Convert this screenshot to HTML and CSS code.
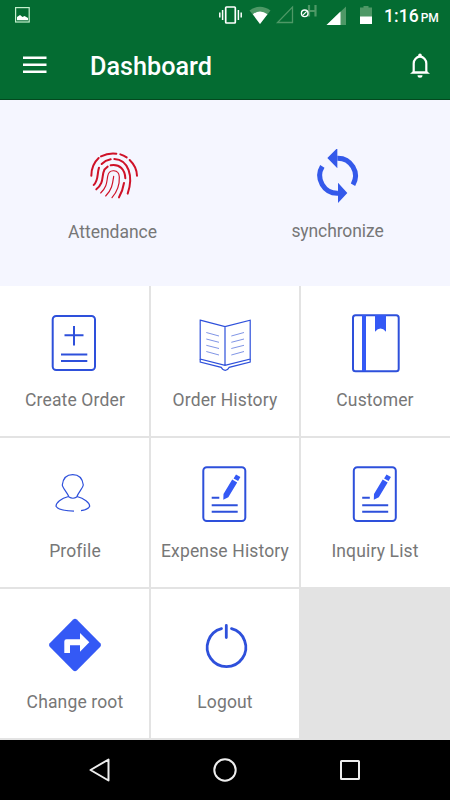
FILE: index.html
```
<!DOCTYPE html>
<html lang="en">
<head>
    <meta charset="UTF-8">
    <meta name="viewport" content="width=device-width, initial-scale=1.0">
    <title>Dashboard</title>
    <link rel="stylesheet" href="styles.css">
</head>
<body>
    <header class="header">
        <div class="status-bar">
            <svg class="status-picture" width="15" height="30" viewBox="0 0 15 30">
                <rect x="0.6" y="7.6" width="13.6" height="14.4" fill="none" stroke="#c5f0cd" stroke-width="1.2"/>
                <path d="M2 20.3V17l3-2 2.5 2 2-1 3.5 2v2.3z" fill="#fff"/>
            </svg>
            <div class="status-icons">
                <svg width="30" height="30" viewBox="0 0 30 30" fill="none" stroke="#fff">
                    <rect x="6.7" y="7" width="9.6" height="16" rx="0.8" stroke-width="1.7"/>
                    <path d="M3.6 10v10M19.4 10v10M0.8 12.5v5M22.2 12.5v5" stroke-width="1.5"/>
                </svg>
                <svg width="26" height="30" viewBox="0 0 26 30">
                    <path d="M0.5 10.5Q11 3 21.5 10.5L11 24z" fill="#4e9866"/>
                    <path d="M3.8 14.3Q11 8.5 18.5 14.3L11 24z" fill="#fff"/>
                </svg>
                <svg width="24" height="30" viewBox="0 0 24 30">
                    <path d="M2.5 22.5H17.5V7z" fill="none" stroke="#4e9866" stroke-width="1.3"/>
                </svg>
                <svg width="26" height="30" viewBox="0 0 26 30" fill="none">
                    <path d="M10 5v11.500M16.500 5v11.500M10 11h6.500" stroke="#4e9866" stroke-width="2.200"/>
                    <circle cx="5.700" cy="13.300" r="3.300" stroke="#fff" stroke-width="1.400"/>
                    <path d="M3.700 15.300l4-4" stroke="#fff" stroke-width="1.200"/>
                </svg>
                <svg width="34" height="30" viewBox="0 0 34 30">
                    <path d="M1.500 25L21 6.500V25z" fill="#4e9866"/>
                    <path d="M1.500 25L15.500 11.500V25z" fill="#fff"/>
                </svg>
                <svg width="25" height="30" viewBox="0 0 25 30">
                    <path d="M1 7.500h3.500V6h5v1.500H13V17H1z" fill="#4e9866"/>
                    <path d="M1 16.500h12V24H1z" fill="#fff"/>
                </svg>
                <div class="clock"><span>1:16</span><small>PM</small></div>
            </div>
        </div>
        <div class="toolbar">
            <svg width="24" height="20" viewBox="0 0 24 20">
                <path d="M0 1.700h23.500M0 8.700h23.500M0 15.700h23.500" stroke="#fff" stroke-width="2.400"/>
            </svg>
            <h1>Dashboard</h1>
            <svg class="bell" width="20" height="26" viewBox="0 0 20 26">
                <path d="M3.700 20V10.500a6.300 6.800 0 0 1 12.600 0V20" fill="none" stroke="#fff" stroke-width="2.200"/>
                <path d="M0 20.800L3 18.300H17L20 20.800zM8.200 4V2.200a1.800 1.800 0 0 1 3.600 0V4zM7.500 22.300h5a2.500 2.500 0 0 1-5 0z" fill="#fff"/>
            </svg>
        </div>
    </header>

    <section class="quick">
        <div class="quick-item">
            <svg width="57" height="57" viewBox="102 42 171 171" fill="none" stroke="#cf1228" stroke-width="6" stroke-linecap="round">
                <path d="M124 122C124 100 132 82 146 69M153 64Q175 53 199 56M211 58Q221 61 230 67M239 75Q260 95 261 122"/>
                <path d="M131 150C146 138 141 115 147 98M155 87Q166 76 182 73M193 72C236 74 251 125 233 176"/>
                <path d="M139 163C160 146 156 130 160 113Q163 101 173 95M182 91C210 86 225 105 226 130M222 144Q218 168 207 187"/>
                <path d="M152 174C172 155 170 140 173 124C177 100 207 103 208 126C209 150 200 172 186 188M167 183C186 165 188 145 191 124" stroke-width="3.500"/>
            </svg>
            <span>Attendance</span>
        </div>
        <div class="quick-item sync">
            <svg width="57" height="57" viewBox="102 42 171 171">
                <path d="M187 69.500A53 53 0 0 1 234 149M142 94A53 53 0 0 0 189 174.500" fill="none" stroke="#3459ea" stroke-width="15"/>
                <path d="M157 69L187 39V100zM217 174L189 204V143z" fill="#3459ea"/>
            </svg>
            <span>synchronize</span>
        </div>
    </section>

    <main class="menu">
        <div class="tile">
            <svg class="icon" viewBox="0 0 70 70">
                <rect x="12.700" y="7" width="42.300" height="54" rx="3.500"/>
                <path d="M34 17v19.500M24.500 26.300h19M21 45.500h26.300M21 52h26.300"/>
            </svg>
            <span>Create Order</span>
        </div>
        <div class="tile">
            <svg class="icon thin" viewBox="0 0 70 70">
                <path d="M10.200 11.200L35 17.700 60.200 11.200V50L35 56.300 10.200 50zM35 17.700v38.600"/>
                <path d="M10.200 50v3l21 5.300q1.500 3 4 3t4-3L60.200 53v-3"/>
                <path class="faint" d="M16.300 23.500L29 27M16.300 30L29 33.300M16.300 36.300L29 39.500M16.300 42.500L29 46M41.300 27L54 23.500M41.300 33.300L54 30M41.300 39.500L54 36.300M41.300 46L54 42.500"/>
            </svg>
            <span>Order History</span>
        </div>
        <div class="tile">
            <svg class="icon" viewBox="0 0 70 70">
                <rect x="13" y="6.300" width="45.700" height="56" rx="2.500"/>
                <path class="solid" d="M22 6h4v56h-4zM35 6h11v16.700q-5.500-6.500-11 0z"/>
            </svg>
            <span>Customer</span>
        </div>
        <div class="tile">
            <svg class="icon thin" viewBox="0 0 70 70">
                <path d="M29 36C27 31 22.500 27 22.300 24 23 17.500 26.500 13.600 32.700 13.600S42.500 17.500 43.300 24C43 27 38.500 31 36.700 36Q33 38.500 29 36z"/>
                <path d="M28.500 35.500C21 37.500 16 41.500 16 45.300Q18 49.500 34 50.200M37 35.500C44 37.500 49.700 41.500 49.700 45.300Q48.500 48.500 41 49.700"/>
            </svg>
            <span>Profile</span>
        </div>
        <div class="tile">
            <svg class="icon" viewBox="0 0 70 70">
                <rect x="13.300" y="6.300" width="42" height="53.700" rx="3.500"/>
                <path d="M21.700 36.700h7.600M21.700 44.300h26M21.700 50.700h26"/>
                <path class="solid" d="M33.300 38.700L33.500 33 42.200 18.400 47.200 21.400 38.300 36.300zM46 13.500L50.400 16.100 48.100 20 43.600 17.400z"/>
            </svg>
            <span>Expense History</span>
        </div>
        <div class="tile">
            <svg class="icon" viewBox="0 0 70 70">
                <rect x="13.800" y="6.300" width="42" height="53.700" rx="3.500"/>
                <path d="M22.200 36.700h7.600M22.200 44.300h26M22.200 50.700h26"/>
                <path class="solid" d="M33.800 38.700L34 33 42.700 18.400 47.700 21.400 38.800 36.300zM46.500 13.500L50.900 16.100 48.600 20 44.100 17.400z"/>
            </svg>
            <span>Inquiry List</span>
        </div>
        <div class="tile">
            <svg class="icon" viewBox="0 0 70 70">
                <path class="solid" d="M33.200 7.400Q35 6 36.800 7.400L60.300 31.200Q61.800 33 60.300 34.800L36.800 58.600Q35 60 33.200 58.600L9.700 34.800Q8.200 33 9.700 31.200z"/>
                <path class="arrow" d="M24.300 41V29.500Q24.300 27.300 26.500 27.300H40V21L49.300 30.300 40 39.700V33.300H30V41z"/>
            </svg>
            <span>Change root</span>
        </div>
        <div class="tile">
            <svg class="icon bold" viewBox="0 0 70 70">
                <path d="M31.500 16.700A19.300 19.300 0 1 0 41.500 16.700M36.300 13.500v12"/>
            </svg>
            <span>Logout</span>
        </div>
    </main>

    <nav class="nav-bar">
        <svg width="24" height="26" viewBox="0 0 24 26"><path d="M2.500 13L20.500 2.500V23.500z"/></svg>
        <svg width="26" height="26" viewBox="0 0 26 26"><circle cx="13" cy="13" r="10.700"/></svg>
        <svg width="24" height="26" viewBox="0 0 24 26"><rect x="3" y="4" width="18" height="18" rx="0.500"/></svg>
    </nav>
</body>
</html>
```
FILE: styles.css
```
* {
    box-sizing: border-box;
}
body {
    font-family: Roboto, sans-serif;
    width: 450px;
    height: 800px;
    margin: 0;
    background-color: #e3e3e3;
    color: #777;
    overflow: hidden;
}
svg {
    display: block;
    flex: none;
}
.header {
    height: 100px;
    background-color: #046c32;
    border-bottom: 1px solid #03491f;
    color: white;
}
.status-bar {
    display: flex;
    height: 32px;
    padding-left: 15px;
}
.status-icons {
    display: flex;
    margin-left: 189px;
}
.clock {
    display: flex;
    align-items: baseline;
    gap: 2px;
    font-size: 17.6px;
    font-weight: 500;
    line-height: 32px;
    white-space: nowrap;
}
.clock small {
    font-size: 12px;
}
.toolbar {
    display: flex;
    align-items: center;
    height: 67px;
    padding: 0 20px 0 23px;
}
.toolbar h1 {
    font-size: 25.2px;
    font-weight: 500;
    line-height: 30px;
    margin: 2px 0 0 43px;
}
.bell {
    margin-left: auto;
}
.quick {
    display: grid;
    grid-template-columns: 1fr 1fr;
    height: 186px;
    background-color: #f5f6ff;
}
.quick-item {
    display: flex;
    flex-direction: column;
    align-items: center;
    padding-top: 49px;
    font-size: 17.5px;
    line-height: 22px;
}
.quick-item span {
    margin-top: 15px;
}
.sync span {
    margin-top: 14px;
    letter-spacing: -0.1px;
}
.menu {
    display: grid;
    grid-template-columns: repeat(3, 150px);
    grid-template-rows: 152px 151px 151px;
}
.tile {
    display: flex;
    flex-direction: column;
    align-items: center;
    padding-top: 23px;
    background-color: white;
    box-shadow: inset 1px 0 #e3e3e3, inset -1px -2px #e3e3e3;
    font-size: 17.5px;
    line-height: 22px;
    letter-spacing: 0.15px;
}
.tile:nth-child(3n+1) {
    box-shadow: inset -1px -2px #e3e3e3;
}
.tile:nth-child(3n) {
    box-shadow: inset 1px -2px #e3e3e3;
}
.tile span {
    margin-top: 9px;
}
.tile:nth-child(-n+3) span {
    margin-top: 10px;
}
.icon {
    width: 70px;
    height: 70px;
    fill: none;
    stroke: #2e50db;
    stroke-width: 2;
}
.thin {
    stroke-width: 1.2;
}
.thin .faint {
    stroke: #8095e6;
    stroke-width: 1;
}
.bold {
    stroke-width: 2.8;
    stroke-linecap: round;
}
.icon .solid {
    fill: #3459f5;
    stroke: none;
}
.icon .arrow {
    fill: white;
    stroke: none;
}
.nav-bar {
    display: flex;
    justify-content: space-between;
    align-items: center;
    height: 60px;
    padding: 0 88px;
    background-color: black;
    fill: none;
    stroke: #eee;
    stroke-width: 2;
    stroke-linejoin: round;
}
```
